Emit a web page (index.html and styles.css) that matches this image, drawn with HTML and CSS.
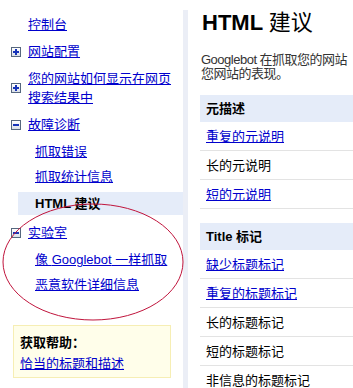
FILE: index.html
```html
<!DOCTYPE html>
<html lang="zh-CN">

<head>
    <meta charset="UTF-8">
    <title>HTML 建议</title>
    <link rel="stylesheet" href="styles.css">
</head>

<body>
    <div class="page">
        <div class="side">
            <ul class="nav">
                <li class="top"><a href="#">控制台</a></li>
                <li>
                    <div class="row"><span class="ico plus"></span><a href="#">网站配置</a></div>
                </li>
                <li>
                    <div class="row"><span class="ico plus"></span><a href="#">您的网站如何显示在网页搜索结果中</a></div>
                </li>
                <li>
                    <div class="row"><span class="ico minus"></span><a href="#">故障诊断</a></div>
                    <ul class="sub">
                        <li><a href="#">抓取错误</a></li>
                        <li><a href="#">抓取统计信息</a></li>
                        <li class="cur">HTML 建议</li>
                    </ul>
                </li>
                <li>
                    <div class="row"><span class="ico minus"></span><a href="#">实验室</a></div>
                    <ul class="sub">
                        <li><a href="#">像 <span class="en">Googlebot</span> 一样抓取</a></li>
                        <li><a href="#">恶意软件详细信息</a></li>
                    </ul>
                </li>
            </ul>
            <div class="help">
                <div class="help_title">获取帮助：</div>
                <a href="#">恰当的标题和描述</a>
            </div>
        </div>

        <div class="main">
            <h1>HTML <span class="cn">建议</span></h1>
            <p class="intro">Googlebot 在抓取您的网站<br>您网站的表现。</p>

            <div class="block">
                <div class="block_head">元描述</div>
                <div class="item"><a href="#">重复的元说明</a></div>
                <div class="item">长的元说明</div>
                <div class="item"><a href="#">短的元说明</a></div>
            </div>

            <div class="block">
                <div class="block_head"><span class="en">Title</span> 标记</div>
                <div class="item"><a href="#">缺少标题标记</a></div>
                <div class="item"><a href="#">重复的标题标记</a></div>
                <div class="item">长的标题标记</div>
                <div class="item">短的标题标记</div>
                <div class="item">非信息的标题标记</div>
            </div>
        </div>

        <!-- 红色圈注 -->
        <svg class="mark" width="190" height="388" viewBox="0 0 190 388">
            <ellipse cx="93" cy="262" rx="90" ry="58" fill="none" stroke="#c0143c" stroke-width="1" />
        </svg>
    </div>
</body>

</html>
```

FILE: styles.css
```css
* {
    margin: 0;
    padding: 0;
}

html,
body {
    overflow: hidden;
    background: #fff;
}

body {
    font-family: "Liberation Sans", "Noto Sans CJK SC", sans-serif;
    font-size: 13px;
    color: #000;
}

a {
    color: #0000cc;
    text-decoration: underline;
}

ul {
    list-style: none;
}

.page {
    position: relative;
    display: flex;
    height: 388px;
}

/* 左侧导航 */
.side {
    flex: none;
    width: 183px;
    margin-top: 10px;
    padding-top: 5px;
    border-right: 5px solid #ebeef6;
}

.nav {
    padding-left: 11px;
}

.nav li {
    line-height: 19px;
    margin-bottom: 8px;
}

.nav .top {
    padding-left: 17px;
}

.row {
    display: flex;
    align-items: center;
}

.ico {
    flex: none;
    position: relative;
    width: 8px;
    height: 8px;
    margin-right: 7px;
    border: 1px solid #56677e;
    background: linear-gradient(#ffffff, #d9dfe8);
}

.ico::before,
.ico::after {
    content: "";
    position: absolute;
    background: #1733b8;
}

.ico::before {
    left: 1px;
    top: 3px;
    width: 6px;
    height: 2px;
}

.plus::after {
    left: 3px;
    top: 1px;
    width: 2px;
    height: 6px;
}

.minus::after {
    display: none;
}

.sub {
    margin-top: 8px;
    margin-left: 7px;
}

.sub li {
    padding-left: 17px;
    margin-bottom: 6px;
}

.sub li:last-child {
    margin-bottom: 0;
}

.sub .cur {
    padding-top: 2px;
    padding-bottom: 2px;
    font-weight: bold;
    background: #e5ecf9;
}

.en {
    font-family: "Liberation Sans", sans-serif;
}

.help {
    width: 144px;
    margin: 31px 0 0 13px;
    padding: 7px 6px 4px;
    border: 1px solid #f6eeb4;
    background: #fffeea;
    line-height: 19px;
}

.help_title {
    font-weight: bold;
    margin-bottom: 2px;
}

/* 右侧内容 */
.main {
    flex: 1;
    min-width: 0;
    margin-left: 12px;
}

.main h1 {
    padding: 10px 0 0 2px;
    font-size: 22px;
    line-height: 26px;
}

.main h1 .cn {
    font-weight: normal;
}

.intro {
    margin-top: 17px;
    padding-left: 1px;
    line-height: 14px;
    color: #333;
    letter-spacing: -0.5px;
    white-space: nowrap;
}

.block {
    margin-top: 14px;
}

.block_head {
    height: 27px;
    line-height: 27px;
    padding-left: 6px;
    font-weight: bold;
    background: #e5ecf9;
}

.item {
    height: 28px;
    line-height: 29px;
    padding-left: 6px;
    border-bottom: 1px solid #e3e3e3;
}

.mark {
    position: absolute;
    left: 0;
    top: 0;
    pointer-events: none;
}
```
